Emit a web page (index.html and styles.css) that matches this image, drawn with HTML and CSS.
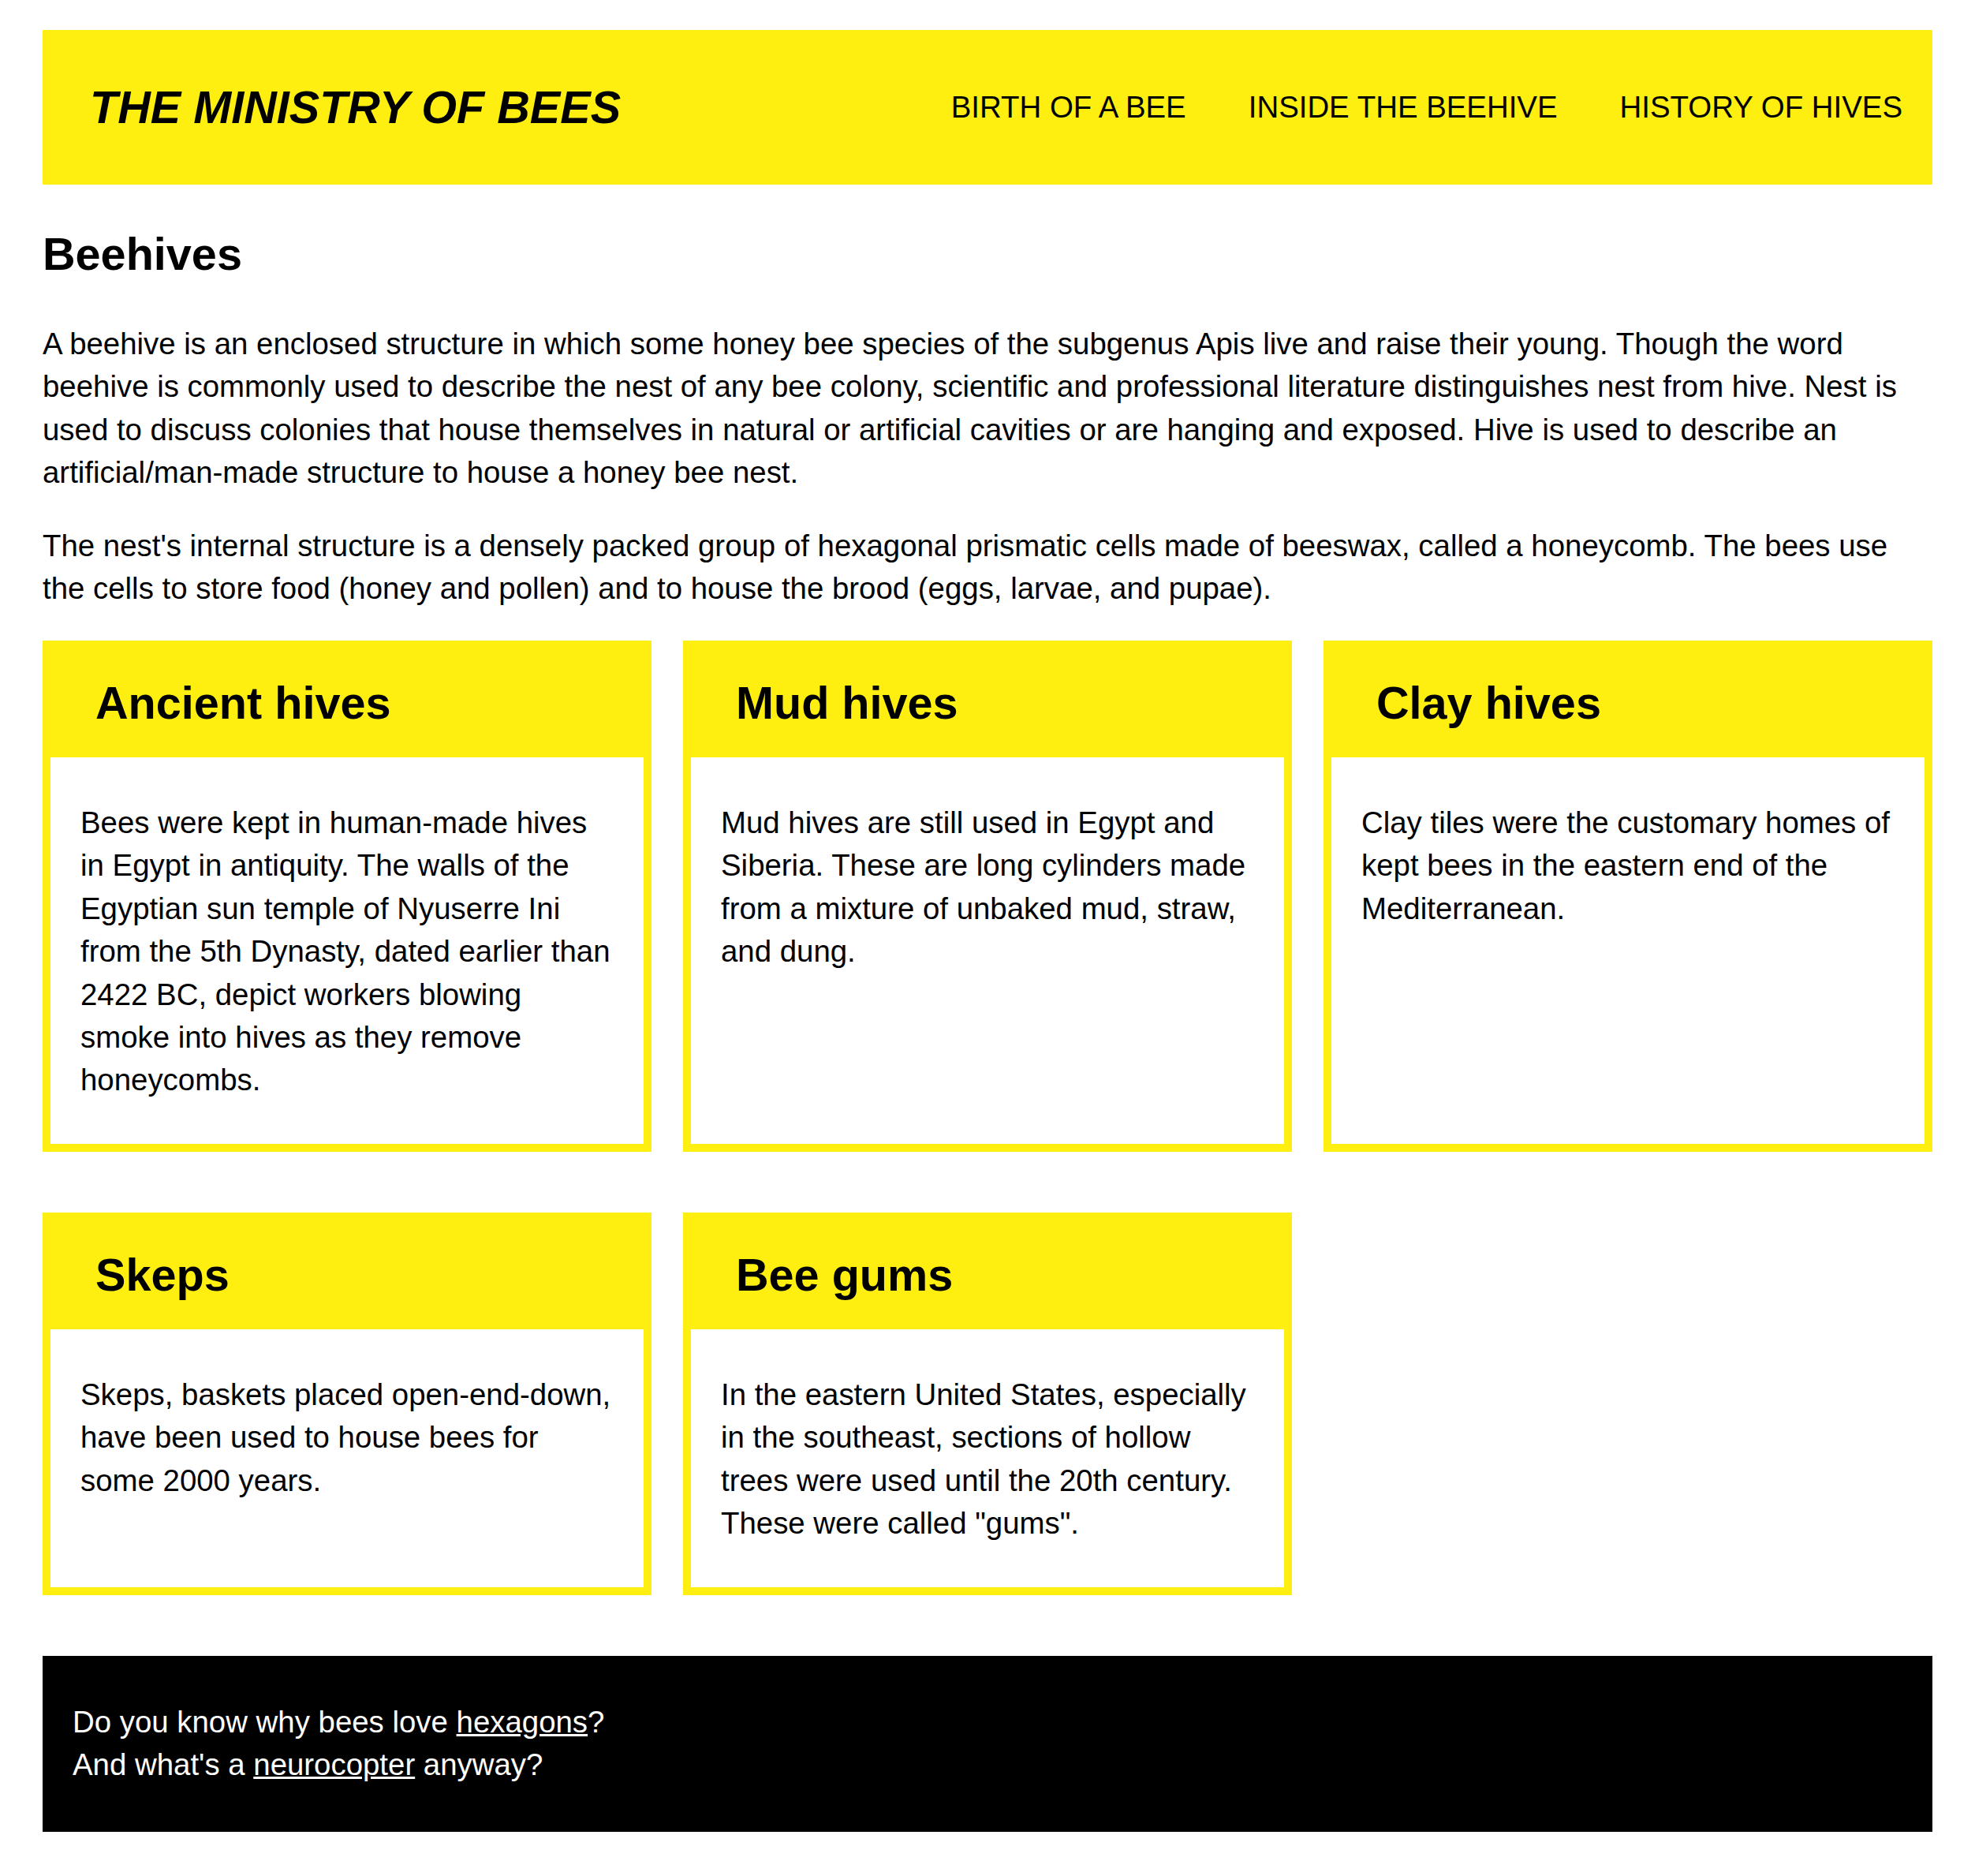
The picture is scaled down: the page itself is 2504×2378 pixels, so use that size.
FILE: index.html
```html
<!DOCTYPE html>
<html lang="en">
<head>
<meta charset="utf-8">
<title>The Ministry of Bees</title>
<link rel="stylesheet" href="styles.css">
</head>
<body>
<div class="page">
  <header class="site-header">
    <h1 class="logo">THE MINISTRY OF BEES</h1>
    <nav class="nav">
      <a class="nav-link" href="#">BIRTH OF A BEE</a>
      <a class="nav-link" href="#">INSIDE THE BEEHIVE</a>
      <a class="nav-link" href="#">HISTORY OF HIVES</a>
    </nav>
  </header>

  <main>
    <h2 class="page-title">Beehives</h2>
    <p class="intro">A beehive is an enclosed structure in which some honey bee species of the subgenus Apis live and raise their young. Though the word beehive is commonly used to describe the nest of any bee colony, scientific and professional literature distinguishes nest from hive. Nest is used to discuss colonies that house themselves in natural or artificial cavities or are hanging and exposed. Hive is used to describe an artificial/man-made structure to house a honey bee nest.</p>
    <p class="intro">The nest's internal structure is a densely packed group of hexagonal prismatic cells made of beeswax, called a honeycomb. The bees use the cells to store food (honey and pollen) and to house the brood (eggs, larvae, and pupae).</p>

    <section class="cards">
      <article class="card">
        <h3 class="card-title">Ancient hives</h3>
        <div class="card-body"><p>Bees were kept in human-made hives in Egypt in antiquity. The walls of the Egyptian sun temple of Nyuserre Ini from the 5th Dynasty, dated earlier than 2422 BC, depict workers blowing smoke into hives as they remove honeycombs.</p></div>
      </article>
      <article class="card">
        <h3 class="card-title">Mud hives</h3>
        <div class="card-body"><p>Mud hives are still used in Egypt and Siberia. These are long cylinders made from a mixture of unbaked mud, straw, and dung.</p></div>
      </article>
      <article class="card">
        <h3 class="card-title">Clay hives</h3>
        <div class="card-body"><p>Clay tiles were the customary homes of kept bees in the eastern end of the Mediterranean.</p></div>
      </article>
      <article class="card">
        <h3 class="card-title">Skeps</h3>
        <div class="card-body"><p>Skeps, baskets placed open-end-down, have been used to house bees for some 2000 years.</p></div>
      </article>
      <article class="card">
        <h3 class="card-title">Bee gums</h3>
        <div class="card-body"><p>In the eastern United States, especially in the southeast, sections of hollow trees were used until the 20th century. These were called "gums".</p></div>
      </article>
    </section>
  </main>

  <footer class="site-footer">
    <p>Do you know why bees love <a href="#">hexagons</a>?<br>And what's a <a href="#">neurocopter</a> anyway?</p>
  </footer>
</div>
</body>
</html>
```

FILE: styles.css
```css
html, body {
  margin: 0;
  padding: 0;
  background: #ffffff;
}

body {
  font-family: "Liberation Sans", Arial, Helvetica, sans-serif;
  font-size: 38.4px;
  line-height: 1.418;
  color: #000000;
}

.page {
  padding: 38px 54px 53px;
}

.site-header {
  height: 196px;
  box-sizing: border-box;
  background: #feef10;
  display: flex;
  align-items: center;
  justify-content: space-between;
  padding: 0 38px 0 60px;
}

.logo {
  margin: 0;
  font-size: 57.6px;
  line-height: 66px;
  font-weight: 700;
  font-style: italic;
}

.nav {
  display: flex;
  gap: 79px;
}

.nav-link {
  color: #000000;
  text-decoration: none;
  font-size: 38.4px;
  line-height: 1.15;
}

.page-title {
  font-size: 57.6px;
  line-height: 66px;
  font-weight: 700;
  margin: 55px 0 54px;
}

.intro {
  margin: 0 0 38px;
}

.cards {
  display: grid;
  grid-template-columns: repeat(3, 1fr);
  column-gap: 40px;
  row-gap: 77px;
}

.card {
  border: 10px solid #feef10;
  display: flex;
  flex-direction: column;
  background: #ffffff;
}

.card-title {
  margin: 0;
  background: #feef10;
  font-size: 57.6px;
  line-height: 66px;
  font-weight: 700;
  padding: 36px 57px;
}

.card-body {
  padding: 18px 38px 15px;
}

.card-body p {
  margin: 38px 0;
}

.site-footer {
  margin-top: 77px;
  background: #000000;
  color: #ffffff;
  padding: 19px 38px;
}

.site-footer p {
  margin: 38px 0;
}

.site-footer a {
  color: #ffffff;
  text-decoration: underline;
}
```
